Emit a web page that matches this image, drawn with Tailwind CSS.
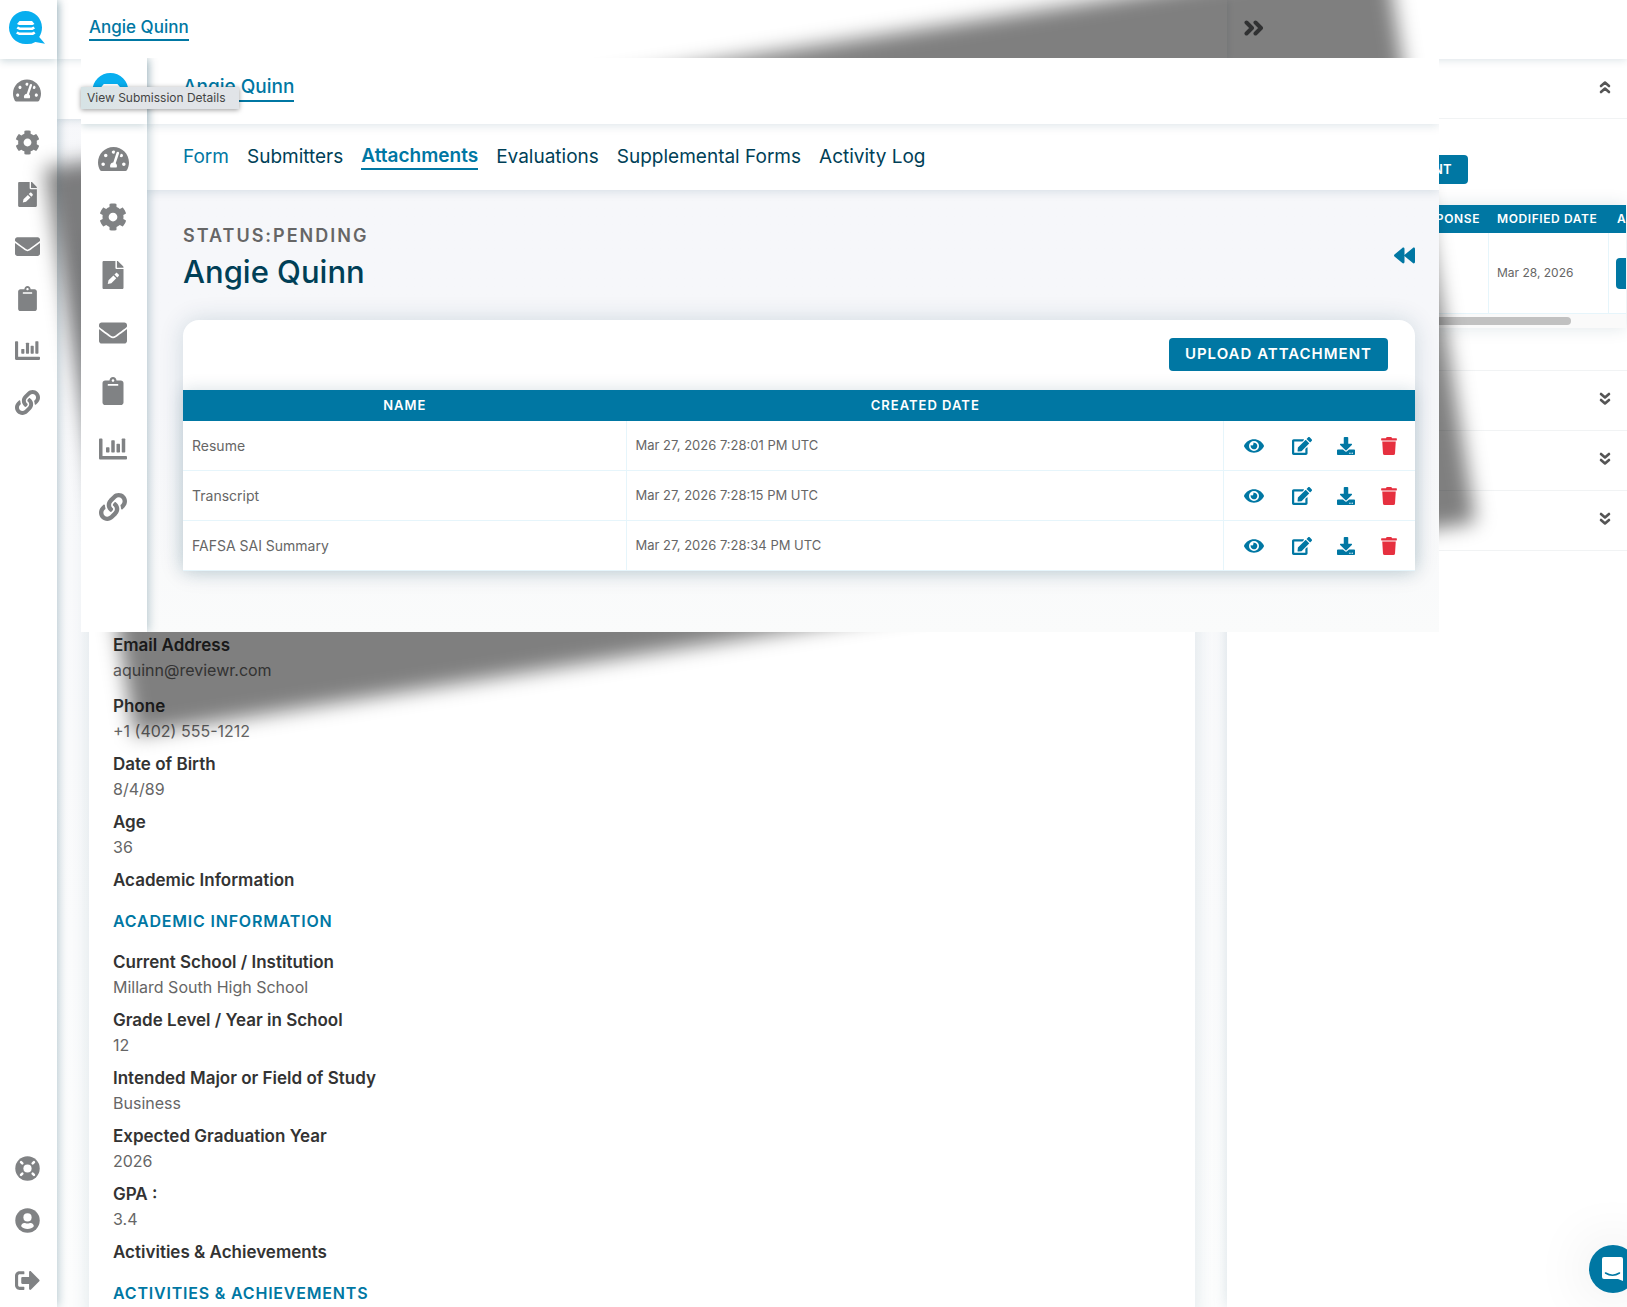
<!DOCTYPE html>
<html lang="en">
<head>
<meta charset="utf-8">
<meta name="viewport" content="width=device-width, initial-scale=1">
<title>Angie Quinn</title>
<script src="https://cdn.jsdelivr.net/npm/@tailwindcss/browser@4"></script>
</head>
<body class="font-[Inter,'Open_Sans',sans-serif] text-[#666]">

<svg class="hidden" aria-hidden="true">
  <symbol id="logo" viewBox="0 0 36 34"><path fill="#08aeef" d="M16.500 33A16.500 16.500 0 1 1 33 16.500c0 4-1.200 7-2.800 9.500L36 32.800l-9.600-1.900A16.500 16.500 0 0 1 16.500 33z"/><path fill="#fff" d="M10.500 10h12.500l2.500 3-2 1H10l-2-1zM9 15.500l2 1h11.500l2-1 1.500 2-2.500 1.500H10.500L7.500 17.500zM8.500 20.500l2 1H23l2-1 1.500 2L24 24H10l-3-1.500z"/></symbol>
  <symbol id="gauge" viewBox="0 0 576 512"><path d="M288 32C128.940 32 0 160.940 0 320c0 52.800 14.250 102.260 39.060 144.800 5.610 9.620 16.300 15.200 27.440 15.200h443c11.140 0 21.830-5.580 27.440-15.200C561.750 422.260 576 372.800 576 320c0-159.060-128.940-288-288-288zm0 64c14.710 0 26.580 10.130 30.320 23.650-1.110 2.260-2.640 4.230-3.450 6.670l-9.220 27.670c-5.130 3.490-10.970 6.010-17.640 6.010-17.670 0-32-14.330-32-32S270.330 96 288 96zM96 384c-17.670 0-32-14.330-32-32s14.330-32 32-32 32 14.330 32 32-14.330 32-32 32zm48-160c-17.670 0-32-14.330-32-32s14.330-32 32-32 32 14.330 32 32-14.330 32-32 32zm246.770-72.410l-61.330 184C343.130 347.330 352 364.540 352 384c0 11.720-3.380 22.550-8.880 32H232.880c-5.500-9.450-8.880-20.280-8.880-32 0-33.940 26.500-61.430 59.900-63.590l61.340-184.010c4.170-12.560 17.730-19.450 30.360-15.170 12.570 4.190 19.350 17.790 15.170 30.360zm14.660 57.200l15.520-46.550c3.470-1.290 7.130-2.230 11.050-2.230 17.670 0 32 14.330 32 32s-14.330 32-32 32c-11.380-.01-20.890-6.280-26.570-15.220zM480 384c-17.670 0-32-14.330-32-32s14.330-32 32-32 32 14.330 32 32-14.330 32-32 32z"/></symbol>
  <symbol id="gear" viewBox="0 0 512 512"><path d="M487.400 315.700l-42.600-24.600c4.300-23.200 4.300-47 0-70.200l42.600-24.600c4.900-2.800 7.100-8.600 5.500-14-11.100-35.600-30-67.800-54.700-94.600-3.800-4.100-10-5.100-14.800-2.300L380.800 110c-17.900-15.400-38.500-27.300-60.800-35.100V25.800c0-5.600-3.900-10.500-9.400-11.700-36.700-8.200-74.300-7.800-109.200 0-5.500 1.200-9.400 6.100-9.400 11.700V75c-22.200 7.900-42.800 19.800-60.800 35.100L88.700 85.500c-4.900-2.800-11-1.900-14.800 2.300-24.700 26.700-43.600 58.900-54.700 94.600-1.700 5.400.6 11.200 5.500 14L67.300 221c-4.300 23.200-4.300 47 0 70.200l-42.600 24.600c-4.900 2.800-7.100 8.600-5.500 14 11.100 35.600 30 67.800 54.700 94.600 3.800 4.100 10 5.100 14.800 2.300l42.600-24.600c17.900 15.400 38.500 27.300 60.800 35.100v49.200c0 5.600 3.900 10.500 9.400 11.700 36.700 8.200 74.300 7.800 109.200 0 5.500-1.200 9.400-6.100 9.400-11.700v-49.200c22.200-7.900 42.800-19.800 60.800-35.100l42.600 24.600c4.900 2.800 11 1.900 14.800-2.300 24.700-26.700 43.600-58.900 54.700-94.600 1.500-5.500-.7-11.300-5.600-14.100zM256 336c-44.100 0-80-35.900-80-80s35.900-80 80-80 80 35.900 80 80-35.900 80-80 80z"/></symbol>
  <symbol id="file" viewBox="0 0 384 512"><path fill-rule="evenodd" d="M24 0h212v124c0 14 10 24 24 24h124v340c0 14-10 24-24 24H24c-14 0-24-10-24-24V24C0 10 10 0 24 0zM96 420l66-14 90-90-52-52-90 90zM218 248l52 52 26-26c8-8 8-18 0-26l-26-26c-8-8-18-8-26 0z"/><path d="M264 0h8c6 0 12 3 17 7l88 89c4 4 7 10 7 16v10H264z"/></symbol>
  <symbol id="mail" viewBox="0 0 512 512"><path d="M502.300 190.800c3.900-3.100 9.700-.2 9.700 4.700V400c0 26.500-21.500 48-48 48H48c-26.500 0-48-21.500-48-48V195.600c0-5 5.700-7.800 9.700-4.700 22.400 17.400 52.100 39.500 154.100 113.600 21.100 15.400 56.700 47.800 92.200 47.600 35.700.3 72-32.800 92.300-47.600 102-74.100 131.600-96.300 154-113.700zM256 320c23.200.4 56.600-29.200 73.400-41.400 132.700-96.300 142.800-104.700 173.400-128.700 5.800-4.500 9.200-11.500 9.200-18.900v-19c0-26.500-21.500-48-48-48H48c-26.500 0-48 21.500-48 48v19c0 7.400 3.400 14.300 9.200 18.900 30.600 23.900 40.700 32.400 173.400 128.700 16.800 12.200 50.200 41.800 73.400 41.400z"/></symbol>
  <symbol id="clip" viewBox="0 0 384 512"><path d="M384 112v352c0 26.510-21.490 48-48 48H48c-26.510 0-48-21.490-48-48V112c0-26.510 21.490-48 48-48h80c0-35.290 28.710-64 64-64s64 28.710 64 64h80c26.510 0 48 21.490 48 48zM192 40c-13.255 0-24 10.745-24 24s10.745 24 24 24 24-10.745 24-24-10.745-24-24-24m96 114v-20a6 6 0 0 0-6-6H102a6 6 0 0 0-6 6v20a6 6 0 0 0 6 6h180a6 6 0 0 0 6-6z"/></symbol>
  <symbol id="chart" viewBox="0 0 512 512"><path d="M16 64h32c9 0 16 7 16 16v304h432c9 0 16 7 16 16v32c0 9-7 16-16 16H24c-13 0-24-11-24-24V80c0-9 7-16 16-16z"/><rect x="128" y="224" width="64" height="96" rx="13"/><rect x="224" y="96" width="64" height="224" rx="13"/><rect x="320" y="160" width="64" height="160" rx="13"/><rect x="416" y="64" width="64" height="256" rx="13"/></symbol>
  <symbol id="link" viewBox="0 0 512 512"><path d="M326.612 185.391c59.747 59.809 58.927 155.698.36 214.590-.11.120-.24.250-.36.370l-67.200 67.200c-59.270 59.270-155.699 59.262-214.960 0-59.270-59.260-59.270-155.700 0-214.960l37.106-37.106c9.840-9.840 26.786-3.300 27.294 10.606.648 17.722 3.826 35.527 9.690 52.721 1.986 5.822.567 12.262-3.783 16.612l-13.087 13.087c-28.026 28.026-28.905 73.660-1.155 101.960 28.024 28.579 74.086 28.749 102.325.510l67.200-67.190c28.191-28.191 28.073-73.757 0-101.830-3.701-3.694-7.429-6.564-10.341-8.569a16.037 16.037 0 0 1-6.947-12.606c-.396-10.567 3.348-21.456 11.698-29.806l21.054-21.055c5.521-5.521 14.182-6.199 20.584-1.731a152.482 152.482 0 0 1 20.522 17.197zM467.547 44.449c-59.261-59.262-155.690-59.270-214.960 0l-67.200 67.200c-.12.120-.25.250-.36.370-58.566 58.892-59.387 154.781.360 214.590a152.454 152.454 0 0 0 20.521 17.196c6.402 4.468 15.064 3.789 20.584-1.731l21.054-21.055c8.350-8.350 12.094-19.239 11.698-29.806a16.037 16.037 0 0 0-6.947-12.606c-2.912-2.005-6.640-4.875-10.341-8.569-28.073-28.073-28.191-73.639 0-101.830l67.200-67.190c28.239-28.239 74.300-28.069 102.325.510 27.750 28.300 26.872 73.934-1.155 101.960l-13.087 13.087c-4.350 4.350-5.769 10.790-3.783 16.612 5.864 17.194 9.042 34.999 9.690 52.721.509 13.906 17.454 20.446 27.294 10.606l37.106-37.106c59.271-59.259 59.271-155.699.001-214.959z"/></symbol>
  <symbol id="help" viewBox="0 0 512 512"><circle cx="256" cy="256" r="250"/><circle cx="256" cy="256" r="84" fill="#fff"/><path stroke="#fff" stroke-width="52" stroke-linecap="round" d="M124 124l26 26M388 124l-26 26M124 388l26-26M388 388l-26-26"/></symbol>
  <symbol id="user" viewBox="0 0 512 512"><circle cx="256" cy="256" r="250"/><circle cx="256" cy="192" r="84" fill="#fff"/><path fill="#fff" d="M126 376c0-44 30-70 66-70 20 0 32 12 64 12s44-12 64-12c36 0 66 26 66 70-32 34-76 56-130 56s-98-22-130-56z"/></symbol>
  <symbol id="exit" viewBox="0 0 512 512"><path d="M497 273L329 441c-15 15-41 4.500-41-17v-96H152c-13.300 0-24-10.700-24-24v-96c0-13.300 10.700-24 24-24h136V88c0-21.400 25.900-32 41-17l168 168c9.300 9.400 9.300 24.600 0 34zM192 436v-40c0-6.600-5.400-12-12-12H96c-17.700 0-32-14.300-32-32V160c0-17.700 14.300-32 32-32h84c6.600 0 12-5.400 12-12V76c0-6.600-5.400-12-12-12H96c-53 0-96 43-96 96v192c0 53 43 96 96 96h84c6.600 0 12-5.400 12-12z"/></symbol>
  <symbol id="eye" viewBox="0 0 576 512"><path d="M572.520 241.400C518.290 135.590 410.930 64 288 64S57.680 135.640 3.480 241.410a32.350 32.350 0 0 0 0 29.190C57.710 376.410 165.070 448 288 448s230.320-71.640 284.520-177.410a32.350 32.350 0 0 0 0-29.190zM288 400a144 144 0 1 1 144-144 143.930 143.930 0 0 1-144 144zm0-240a95.310 95.310 0 0 0-25.310 3.790 47.850 47.850 0 0 1-66.900 66.900A95.780 95.780 0 1 0 288 160z"/></symbol>
  <symbol id="edit" viewBox="0 0 576 512"><path d="M402.600 83.200l90.200 90.200c3.800 3.800 3.800 10 0 13.800L274.400 405.600l-92.800 10.300c-12.400 1.400-22.900-9.100-21.500-21.500l10.300-92.800L388.800 83.200c3.800-3.800 10-3.800 13.800 0zm162-22.900l-48.800-48.800c-15.200-15.200-39.900-15.200-55.200 0l-35.400 35.400c-3.800 3.800-3.800 10 0 13.800l90.200 90.200c3.800 3.800 10 3.800 13.800 0l35.400-35.400c15.200-15.300 15.200-40 0-55.200zM384 346.200V448H64V128h229.800c3.200 0 6.200-1.300 8.500-3.500l40-40c7.600-7.600 2.200-20.500-8.500-20.500H48C21.500 64 0 85.500 0 112v352c0 26.500 21.500 48 48 48h352c26.500 0 48-21.500 48-48V306.200c0-10.700-12.900-16-20.500-8.500l-40 40c-2.200 2.300-3.500 5.300-3.500 8.500z"/></symbol>
  <symbol id="down" viewBox="0 0 512 512"><path d="M216 0h80c13.300 0 24 10.700 24 24v168h87.700c17.800 0 26.700 21.500 14.100 34.100L269.700 378.300c-7.500 7.500-19.800 7.500-27.300 0L90.100 226.100c-12.600-12.600-3.700-34.100 14.100-34.100H192V24c0-13.300 10.700-24 24-24zm296 376v112c0 13.300-10.700 24-24 24H24c-13.300 0-24-10.700-24-24V376c0-13.300 10.700-24 24-24h146.700l49 49c20.100 20.100 52.500 20.100 72.600 0l49-49H488c13.300 0 24 10.700 24 24zm-124 88c0-11-9-20-20-20s-20 9-20 20 9 20 20 20 20-9 20-20zm64 0c0-11-9-20-20-20s-20 9-20 20 9 20 20 20 20-9 20-20z"/></symbol>
  <symbol id="trash" viewBox="0 0 448 512"><path d="M432 32H312l-9.400-18.700A24 24 0 0 0 281.100 0H166.800a23.720 23.720 0 0 0-21.400 13.300L136 32H16A16 16 0 0 0 0 48v32a16 16 0 0 0 16 16h416a16 16 0 0 0 16-16V48a16 16 0 0 0-16-16zM53.200 467a48 48 0 0 0 47.900 45h245.800a48 48 0 0 0 47.900-45L416 128H32z"/></symbol>
  <symbol id="back" viewBox="0 0 512 512"><path d="M11.500 280.600l192 160c20.600 17.200 52.500 2.800 52.500-24.600V96c0-27.400-31.900-41.800-52.500-24.600l-192 160c-15.300 12.800-15.300 36.400 0 49.200zm256 0l192 160c20.600 17.200 52.500 2.800 52.500-24.600V96c0-27.400-31.900-41.800-52.500-24.600l-192 160c-15.300 12.800-15.300 36.400 0 49.200z"/></symbol>
  <symbol id="dbl" viewBox="0 0 20 16"><path fill="none" stroke="currentColor" stroke-width="4" stroke-linecap="round" stroke-linejoin="round" d="M2.500 2.500L8 8l-5.500 5.500M11.500 2.500L17 8l-5.500 5.500"/></symbol>
  <symbol id="chevs" viewBox="0 0 12 14"><path fill="none" stroke="currentColor" stroke-width="2.600" stroke-linecap="round" stroke-linejoin="round" d="M2 2l4 3.500L10 2M2 8l4 3.500L10 8"/></symbol>
</svg>

<div class="relative flex h-screen overflow-hidden bg-linear-to-b from-[#f6f7fa] to-[#fdfefe]">

  <!-- Main navigation rail -->
  <aside class="z-10 flex w-[57px] shrink-0 flex-col bg-white fill-[#808284] shadow-[1px_0_10px_rgba(0,63,87,0.3)]">
    <a href="#" aria-label="Home" class="flex h-[59px] items-center pl-[9px] pb-1 shadow-[0_2px_8px_rgba(0,63,87,0.2)]"><svg class="h-[34px] w-9"><use href="#logo"/></svg></a>
    <nav class="flex grow flex-col pt-[5px] pr-[3px] pb-px">
      <a href="#" aria-label="Dashboard" class="flex h-[52px] items-center justify-center"><svg class="h-[25px] w-7"><use href="#gauge"/></svg></a>
      <a href="#" aria-label="Settings" class="flex h-[52px] items-center justify-center"><svg class="size-[25px]"><use href="#gear"/></svg></a>
      <a href="#" aria-label="Forms" class="flex h-[52px] items-center justify-center"><svg class="size-[25px]"><use href="#file"/></svg></a>
      <a href="#" aria-label="Mail" class="flex h-[52px] items-center justify-center"><svg class="size-[25px]"><use href="#mail"/></svg></a>
      <a href="#" aria-label="Submissions" class="flex h-[52px] items-center justify-center"><svg class="size-[25px]"><use href="#clip"/></svg></a>
      <a href="#" aria-label="Reports" class="flex h-[52px] items-center justify-center"><svg class="size-[25px]"><use href="#chart"/></svg></a>
      <a href="#" aria-label="Links" class="flex h-[52px] items-center justify-center"><svg class="size-[25px]"><use href="#link"/></svg></a>
      <a href="#" aria-label="Help" class="mt-auto flex h-[52px] items-center justify-center"><svg class="size-[25px]"><use href="#help"/></svg></a>
      <a href="#" aria-label="Account" class="flex h-[52px] items-center justify-center"><svg class="size-[25px]"><use href="#user"/></svg></a>
      <a href="#" aria-label="Sign out" class="mt-2 flex h-[52px] items-center justify-center"><svg class="size-[25px]"><use href="#exit"/></svg></a>
    </nav>
  </aside>

  <!-- Submission details -->
  <main class="flex min-w-0 grow flex-col">
    <header class="z-[1] flex h-[59px] shrink-0 items-center bg-white px-8 pb-1 shadow-[0_1px_8px_rgba(0,63,87,0.15)]">
      <a href="#" class="border-b-2 border-[#0077a3] text-[17px] font-medium leading-6 text-[#0077a3]">Angie Quinn</a>
    </header>
    <div class="h-[60px] shrink-0 bg-white shadow-[0_1px_8px_rgba(0,63,87,0.15)]"></div>
    <section class="mx-8 mt-[120px] grow bg-white px-6 pt-[394px] text-base leading-[25px] shadow-[0_0_20px_rgba(0,63,87,0.13)]">
      <dl class="flex flex-col gap-2">
        <div class="pb-[3px]"><dt class="text-[17px] font-semibold leading-[25px] text-[#333]">Email Address</dt><dd>aquinn@reviewr.com</dd></div>
        <div><dt class="text-[17px] font-semibold leading-[25px] text-[#333]">Phone</dt><dd>+1 (402) 555-1212</dd></div>
        <div><dt class="text-[17px] font-semibold leading-[25px] text-[#333]">Date of Birth</dt><dd>8/4/89</dd></div>
        <div><dt class="text-[17px] font-semibold leading-[25px] text-[#333]">Age</dt><dd>36</dd></div>
      </dl>
      <p class="mt-2 text-[17px] font-semibold leading-[25px] text-[#333]">Academic Information</p>
      <h2 class="my-4 font-semibold uppercase tracking-wider text-[#0077a3]">Academic Information</h2>
      <dl class="flex flex-col gap-2">
        <div><dt class="text-[17px] font-semibold leading-[25px] text-[#333]">Current School / Institution</dt><dd>Millard South High School</dd></div>
        <div><dt class="text-[17px] font-semibold leading-[25px] text-[#333]">Grade Level / Year in School</dt><dd>12</dd></div>
        <div><dt class="text-[17px] font-semibold leading-[25px] text-[#333]">Intended Major or Field of Study</dt><dd>Business</dd></div>
        <div><dt class="text-[17px] font-semibold leading-[25px] text-[#333]">Expected Graduation Year</dt><dd>2026</dd></div>
        <div><dt class="text-[17px] font-semibold leading-[25px] text-[#333]">GPA :</dt><dd>3.4</dd></div>
      </dl>
      <p class="mt-2 text-[17px] font-semibold leading-[25px] text-[#333]">Activities &amp; Achievements</p>
      <h2 class="my-4 font-semibold uppercase tracking-wider text-[#0077a3]">Activities &amp; Achievements</h2>
    </section>
  </main>

  <!-- Side drawer -->
  <aside class="flex w-[400px] shrink-0 flex-col bg-white shadow-[0_0_14px_rgba(0,63,87,0.15)]">
    <header class="flex h-[59px] shrink-0 items-center px-[17px] pb-1 shadow-[0_1px_8px_rgba(0,63,87,0.15)]">
      <button aria-label="Collapse drawer"><svg class="h-4 w-5 text-[#606264]"><use href="#dbl"/></svg></button>
    </header>
    <section class="border-b border-[#f1f3f4]">
      <button aria-label="Collapse section" class="flex h-[60px] w-full items-center justify-end border-b border-[#f1f3f4] pr-4 pb-1 text-[#555]"><svg class="h-[14px] w-3 rotate-180"><use href="#chevs"/></svg></button>
      <div class="flex justify-end pt-9 pr-[159px]"><button class="h-[29px] rounded bg-[#0077a3] px-4 text-[13px] font-semibold uppercase tracking-wide text-white">Upload Attachment</button></div>
      <div class="mt-[21px] ml-6 mr-px mb-[42px] overflow-hidden shadow-[0_0_16px_rgba(0,63,87,0.13)]">
        <table class="w-[448px] table-fixed border-separate border-spacing-0 text-left text-[12px]">
          <thead class="bg-[#0077a3] font-semibold uppercase text-white">
            <tr class="h-[28px]"><th class="w-[238px] pr-[9px] text-right font-semibold tracking-wider">Response</th><th class="w-[120px] pl-2 font-semibold tracking-wider">Modified Date</th><th class="w-[90px] pl-2 font-semibold tracking-wider">Action</th></tr>
          </thead>
          <tbody>
            <tr class="h-[81px]"><td class="border-r border-b border-[#e6f5fb]"></td><td class="border-r border-b border-[#e6f5fb] pl-2">Mar 28, 2026</td><td class="border-b border-[#e6f5fb] pl-[7px]"><button aria-label="Open response" class="block h-[31px] w-16 rounded-sm bg-[#0077a3]"></button></td></tr>
          </tbody>
        </table>
        <div class="h-[14px] bg-[#fafafa] py-[3px] pr-[55px]"><div class="h-2 rounded-full bg-[#c1c1c1]"></div></div>
      </div>
    </section>
    <button aria-label="Expand section" class="flex h-[60px] items-center justify-end border-b border-[#f1f3f4] pr-4 pb-1 text-[#555]"><svg class="h-[14px] w-3"><use href="#chevs"/></svg></button>
    <button aria-label="Expand section" class="flex h-[60px] items-center justify-end border-b border-[#f1f3f4] pr-4 pb-1 text-[#555]"><svg class="h-[14px] w-3"><use href="#chevs"/></svg></button>
    <button aria-label="Expand section" class="flex h-[60px] items-center justify-end border-b border-[#f1f3f4] pr-4 pb-1 text-[#555]"><svg class="h-[14px] w-3"><use href="#chevs"/></svg></button>
  </aside>

  <!-- Chat launcher -->
  <button aria-label="Open chat" class="absolute -right-[10px] bottom-[14px] z-10 flex size-12 items-center justify-center rounded-full bg-[#0077a3] shadow-[0_0_60px_rgba(0,0,0,0.12)]">
    <svg class="size-6" viewBox="0 0 24 24"><path fill="#fff" d="M3 0h17a2 2 0 0 1 2 2v22l-5-2H3a2 2 0 0 1-2-2V2a2 2 0 0 1 2-2z"/><path fill="none" stroke="#0077a3" stroke-width="1.500" stroke-linecap="round" d="M4.500 16q7 4.500 14 0"/></svg>
  </button>

  <!-- Attachments window with its tilted shadow -->
  <div class="absolute top-[58px] right-[188px] left-[81px] z-20">
    <div class="absolute inset-0 -rotate-[9deg] bg-black/50 blur-[10px]"></div>
    <div class="relative flex overflow-hidden bg-linear-to-b from-[#f6f7fa] from-60% to-[#fafbfb]">
      <aside class="z-[2] w-[66px] shrink-0 bg-white fill-[#808284] shadow-[1px_0_10px_rgba(0,63,87,0.3)]">
        <a href="#" aria-label="Home" class="flex h-[66px] items-center pl-[11px] shadow-[0_2px_8px_rgba(0,63,87,0.2)]"><svg class="h-[37px] w-10"><use href="#logo"/></svg></a>
        <nav class="flex flex-col pt-[6px] pr-[2px]">
          <a href="#" aria-label="Dashboard" class="flex h-[58px] items-center justify-center"><svg class="h-7 w-[31px]"><use href="#gauge"/></svg></a>
          <a href="#" aria-label="Settings" class="flex h-[58px] items-center justify-center"><svg class="size-7"><use href="#gear"/></svg></a>
          <a href="#" aria-label="Forms" class="flex h-[58px] items-center justify-center"><svg class="size-7"><use href="#file"/></svg></a>
          <a href="#" aria-label="Mail" class="flex h-[58px] items-center justify-center"><svg class="size-7"><use href="#mail"/></svg></a>
          <a href="#" aria-label="Submissions" class="flex h-[58px] items-center justify-center"><svg class="size-7"><use href="#clip"/></svg></a>
          <a href="#" aria-label="Reports" class="flex h-[58px] items-center justify-center"><svg class="size-7"><use href="#chart"/></svg></a>
          <a href="#" aria-label="Links" class="flex h-[58px] items-center justify-center"><svg class="size-7"><use href="#link"/></svg></a>
        </nav>
      </aside>
      <div class="min-w-0 grow">
        <header class="relative z-[1] flex h-[66px] items-center bg-white pl-9 pb-[6px] shadow-[0_1px_10px_rgba(0,63,87,0.15)]">
          <a href="#" class="border-b-2 border-[#0077a3] text-[19px] font-medium leading-[26px] text-[#0077a3]">Angie Quinn</a>
        </header>
        <nav class="flex h-[66px] items-center gap-[18px] bg-white pl-9 text-[19px] leading-[24px] text-[#003f57] shadow-[0_1px_10px_rgba(0,63,87,0.15)]">
          <a href="#" class="text-[#0077a3]">Form</a>
          <a href="#">Submitters</a>
          <a href="#" class="border-b-2 border-[#0077a3] font-semibold text-[#0077a3]">Attachments</a>
          <a href="#">Evaluations</a>
          <a href="#">Supplemental Forms</a>
          <a href="#">Activity Log</a>
        </nav>
        <div class="pt-[33px] pr-6 pb-[61px] pl-9">
          <div class="flex items-center justify-between">
            <div>
              <p class="text-[18px] font-semibold leading-[26px] tracking-[2px]">STATUS:PENDING</p>
              <h1 class="text-[31px] font-medium leading-[45px] text-[#003f57]">Angie Quinn</h1>
            </div>
            <button aria-label="Previous" class="pb-[6px]"><svg class="size-[21px] fill-[#0077a3]"><use href="#back"/></svg></button>
          </div>
          <section class="mt-[26px] rounded-t-2xl bg-white shadow-[0_0_24px_rgba(0,63,87,0.16)]">
            <div class="flex justify-end pt-[18px] pr-[27px] pb-[19px]">
              <button class="h-[33px] rounded bg-[#0077a3] px-4 text-[15px] font-semibold tracking-[1px] text-white">UPLOAD ATTACHMENT</button>
            </div>
            <table class="w-full table-fixed border-separate border-spacing-0 text-[14px] shadow-[0_0_16px_rgba(0,63,87,0.16)]">
              <thead class="bg-[#0077a3] text-[13px] text-white">
                <tr class="h-[31px]"><th class="w-[36%] font-semibold tracking-[1px]">NAME</th><th class="font-semibold tracking-[1px]">CREATED DATE</th><th class="w-[191px]"></th></tr>
              </thead>
              <tbody id="rows" class="bg-white"></tbody>
            </table>
          </section>
        </div>
      </div>
    </div>
    <div role="tooltip" class="absolute top-[29px] left-0 z-[3] h-[22px] w-[158px] bg-linear-to-r from-[#d6e3e5] to-[#e1e4e8] to-35% pl-[6px] text-[12px] leading-[22px] text-[#444] shadow-[0_1px_5px_rgba(0,0,0,0.4)]">View Submission Details</div>
  </div>
</div>

<script>
  const files = [
    ["Resume", "Mar 27, 2026 7:28:01 PM UTC"],
    ["Transcript", "Mar 27, 2026 7:28:15 PM UTC"],
    ["FAFSA SAI Summary", "Mar 27, 2026 7:28:34 PM UTC"],
  ];
  document.getElementById("rows").innerHTML = files.map(([name, date]) => `
    <tr class="h-[50px]">
      <td class="border-r border-b border-[#e6f5fb] pl-[9px]">${name}</td>
      <td class="border-r border-b border-[#e6f5fb] pl-[9px] text-[13px]">${date}</td>
      <td class="border-b border-[#e6f5fb] pl-5">
        <div class="flex items-center gap-[25px] fill-[#0077a3]">
          <button aria-label="View ${name}" class="mr-[3px]"><svg class="h-[18px] w-5"><use href="#eye"/></svg></button>
          <button aria-label="Edit ${name}"><svg class="h-[18px] w-5"><use href="#edit"/></svg></button>
          <button aria-label="Download ${name}"><svg class="size-[18px]"><use href="#down"/></svg></button>
          <button aria-label="Delete ${name}"><svg class="size-[18px] fill-[#e6303f]"><use href="#trash"/></svg></button>
        </div>
      </td>
    </tr>`).join("");
</script>
</body>
</html>
